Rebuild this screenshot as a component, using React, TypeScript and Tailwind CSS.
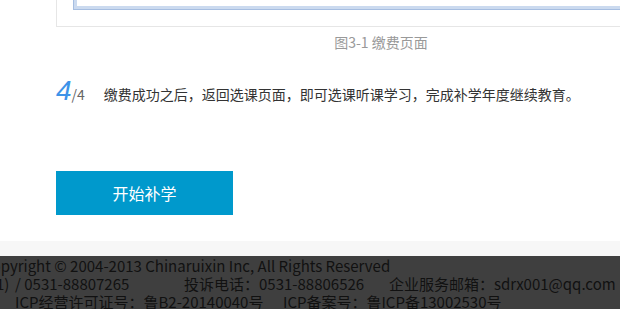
import React from "react";

export default function App() {
  return (
    <div
      className="w-[620px] h-[309px] overflow-hidden bg-white"
      style={{ fontFamily: '"Microsoft YaHei", "Noto Sans CJK SC", "Noto Sans", sans-serif' }}
    >
      <div className="ml-[56px] w-[650px]">
        <div className="-mt-[100px] border border-[#e6e6e6] px-4 py-4">
          <div className="h-[93px] border border-[#a6bee1]">
            <div className="h-full border-[3px] border-[#cbdaef] bg-white" />
          </div>
        </div>
        <div className="mt-[6px] h-[18px] text-center text-[14px] leading-[18px] text-[#999999]">
          图3-1 缴费页面
        </div>
        <div className="mt-[26px] flex h-[28px] items-baseline">
          <span
            className="text-[28px] italic leading-[28px] text-[#3d93e8]"
            style={{ fontFamily: '"Liberation Sans", Arial, sans-serif' }}
          >
            4
          </span>
          <span className="text-[14px] text-[#666666]">/4</span>
          <span className="ml-[19px] text-[14px] text-[#333333]">
            缴费成功之后，返回选课页面，即可选课听课学习，完成补学年度继续教育。
          </span>
        </div>
        <button className="mt-[66px] flex h-[44px] w-[177px] items-center justify-center bg-[#0099cc] text-[16px] text-white">
          开始补学
        </button>
      </div>
      <div className="mt-[26px] h-[15px] bg-[#f7f7f7]" />
      <div className="h-[53px] bg-[#3f3f3f] pt-[1px] text-[15px] leading-[18px] text-[#111111] whitespace-nowrap">
        <div className="-ml-[18px]">Copyright © 2004-2013 Chinaruixin Inc, All Rights Reserved</div>
        <div className="flex">
          <span className="-ml-[4px] w-[19px] shrink-0">1)</span>
          <span className="w-[169px] shrink-0">/ 0531-88807265</span>
          <span className="w-[205px] shrink-0">投诉电话：0531-88806526</span>
          <span className="shrink-0">企业服务邮箱：sdrx001@qq.com</span>
        </div>
        <div className="flex pl-[15px]">
          <span className="w-[268px] shrink-0">ICP经营许可证号：鲁B2-20140040号</span>
          <span className="shrink-0">ICP备案号：鲁ICP备13002530号</span>
        </div>
      </div>
    </div>
  );
}
